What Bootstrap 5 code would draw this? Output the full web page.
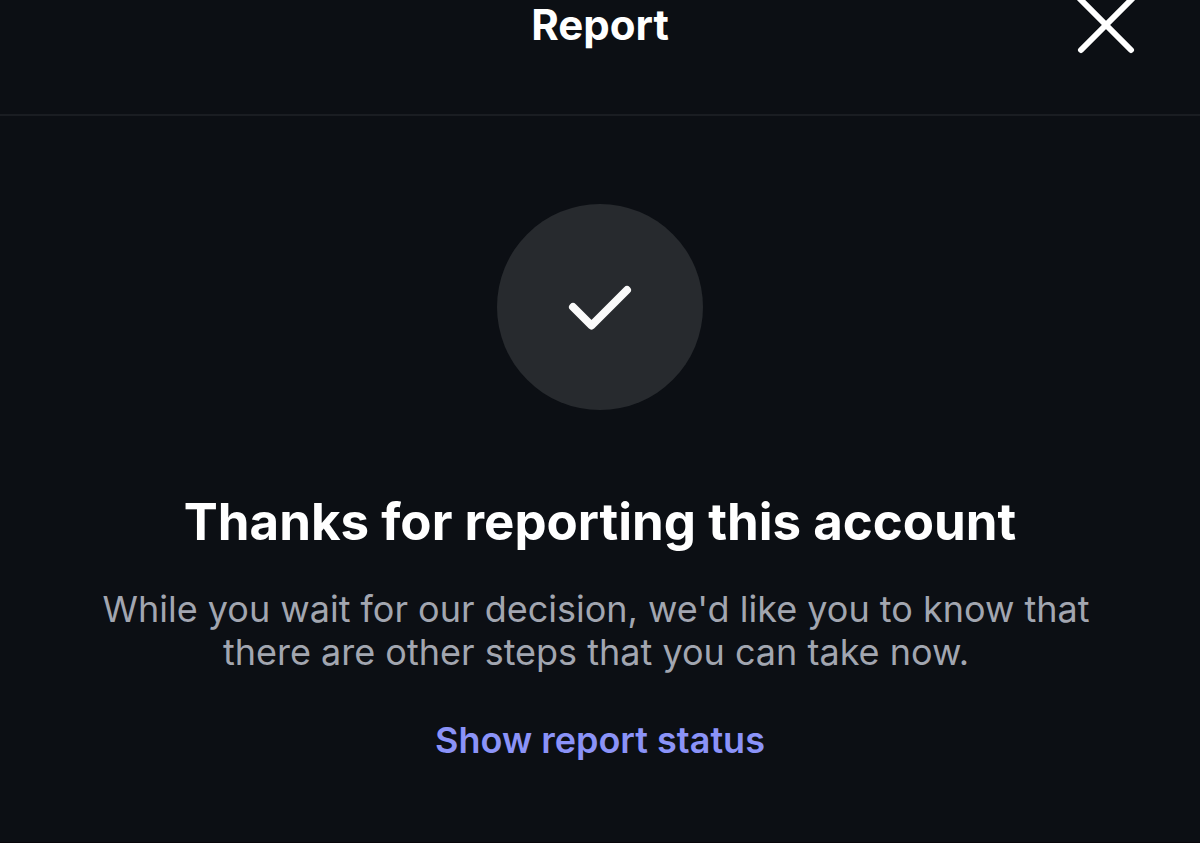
<!DOCTYPE html>
<html lang="en" data-bs-theme="dark">
<head>
<meta charset="utf-8">
<meta name="viewport" content="width=device-width, initial-scale=1">
<title>Report</title>
<link href="https://cdn.jsdelivr.net/npm/bootstrap@5.3.0/dist/css/bootstrap.min.css" rel="stylesheet">
<style>
body{background:#0c0f14;color:#fafbfd;font-family:Inter,"Liberation Sans",sans-serif}
.sheet{border-bottom:1px solid #07050a}
.sheet-head{height:116px;border-bottom:2px solid #1a1d22}
.sheet-title{font-size:42px;line-height:50px;font-weight:700}
.close-btn{right:64px}
.tick-disc{width:206px;height:206px;background:#272a2e}
.sheet-main{padding-top:88px}
.thanks{font-size:51px;line-height:64px;font-weight:700;margin-top:80px}
.steps{font-size:36px;line-height:43px;color:#a2a6b0;margin-top:34px}
.status-link{font-size:36px;line-height:44px;font-weight:600;color:#8b93f8;margin-top:44px}
</style>
</head>
<body>
<div class="sheet min-vh-100 d-flex flex-column">
<header class="sheet-head position-relative text-center">
<h1 class="sheet-title m-0">Report</h1>
<button type="button" class="close-btn btn p-0 border-0 position-absolute top-0" aria-label="Close"><svg class="d-block" width="60" height="56" viewBox="0 0 60 56" fill="none" stroke="#fff" stroke-width="6" stroke-linecap="round" aria-hidden="true"><path d="M4 -1 55 50M56 -1 5 50"/></svg></button>
</header>
<main class="sheet-main d-flex flex-column align-items-center text-center">
<div class="tick-disc rounded-circle d-flex align-items-center justify-content-center"><svg width="70" height="52" viewBox="0 0 70 52" fill="none" stroke="#fafafa" stroke-width="8" stroke-linecap="round" stroke-linejoin="round" aria-hidden="true"><path d="M8 26 26.500 44.500 62 9"/></svg></div>
<h2 class="thanks mb-0">Thanks for reporting this account</h2>
<p class="steps mb-0 me-2">While you wait for our decision, we'd like you to know that<br>there are other steps that you can take now.</p>
<a href="#" class="status-link text-decoration-none">Show report status</a>
</main>
</div>
<script src="https://cdn.jsdelivr.net/npm/bootstrap@5.3.0/dist/js/bootstrap.bundle.min.js"></script>
</body>
</html>
